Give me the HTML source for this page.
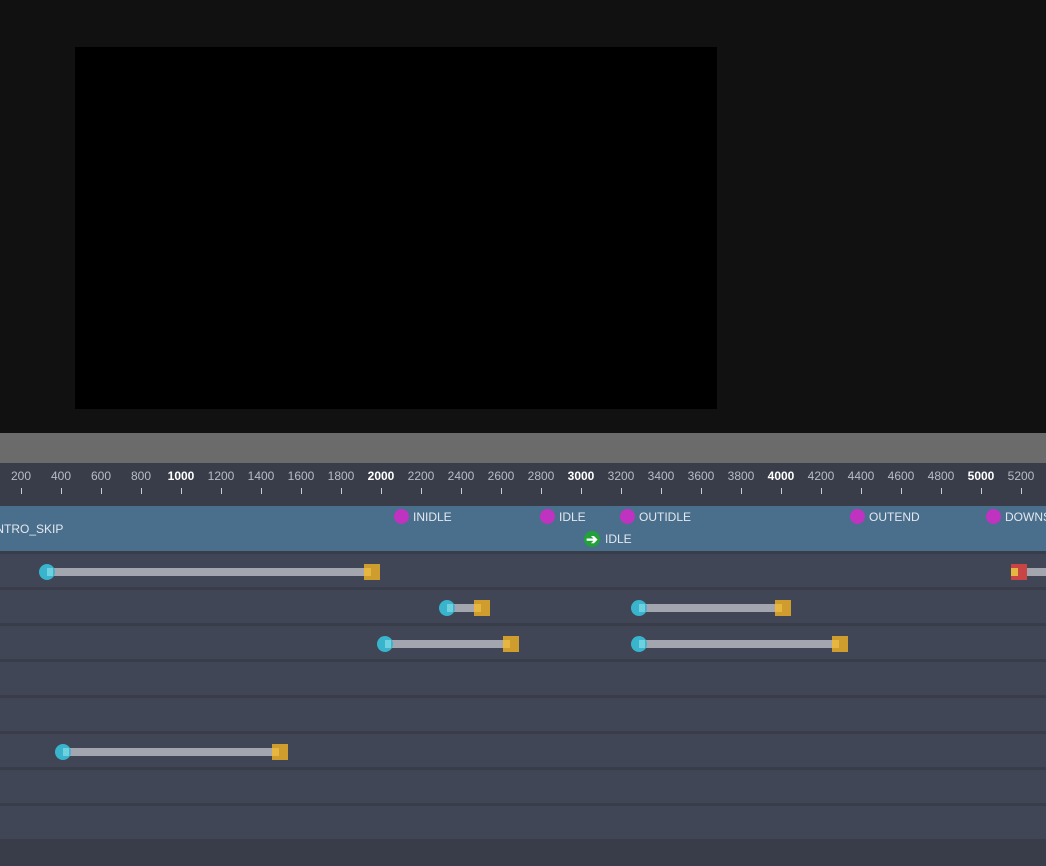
<!DOCTYPE html><html><head><style>
body{margin:0;width:1046px;height:866px;background:#111;position:relative;overflow:hidden;font-family:"Liberation Sans",sans-serif}
div{position:absolute;box-sizing:border-box}
.l{font-size:12px;color:#b8bcc6;transform:translateX(-50%);top:469px}
.l.b{color:#fff;font-weight:bold}
.t{width:1px;height:6px;background:#c8ccd4;top:488px}
.row{left:0;width:1046px;height:33px;background:#414656}
.bar{height:8px;background:#a3a6ae}
.c{width:16px;height:16px;border-radius:50%;background:#38b4cc}
.c::after{content:"";position:absolute;left:8px;top:4px;width:6px;height:8px;background:#6fd0e0}
.s{width:16px;height:16px;background:#cf9d2d}
.s::after{content:"";position:absolute;left:0;top:4px;width:7px;height:8px;background:#e6b640}
.m{width:15px;height:15px;border-radius:50%;background:#c032c0;top:509px}
.ml{font-size:12px;color:#e4e8ee;top:510px}
</style></head><body>
<div style="left:75px;top:47px;width:642px;height:362px;background:#000"></div>
<div style="left:0;top:433px;width:1046px;height:30px;background:#6b6b6b"></div>
<div style="left:0;top:463px;width:1046px;height:403px;background:#393d4a"></div>
<div style="left:0;top:506px;width:1046px;height:45px;background:#4a6f8d"></div>
<div style="left:0;top:522px;font-size:12px;color:#e4e8ee;margin-left:-8px">INTRO_SKIP</div>
<div class="m" style="left:394px"></div><div class="ml" style="left:413px">INIDLE</div>
<div class="m" style="left:540px"></div><div class="ml" style="left:559px">IDLE</div>
<div class="m" style="left:620px"></div><div class="ml" style="left:639px">OUTIDLE</div>
<div class="m" style="left:850px"></div><div class="ml" style="left:869px">OUTEND</div>
<div class="m" style="left:986px"></div><div class="ml" style="left:1005px">DOWNSTREAM</div>
<div style="left:584px;top:531px;width:16px;height:16px;border-radius:50%;background:#22a03a;color:#fff;font-size:14px;line-height:16px;text-align:center;font-weight:bold">➔</div>
<div class="ml" style="left:605px;top:532px">IDLE</div>
<div class="row" style="top:554px"></div><div class="row" style="top:590px"></div><div class="row" style="top:626px"></div><div class="row" style="top:662px"></div><div class="row" style="top:698px"></div><div class="row" style="top:734px"></div><div class="row" style="top:770px"></div><div class="row" style="top:806px"></div>
<div class="bar" style="left:47px;width:325px;top:568px"></div><div class="c" style="left:39px;top:564px"></div><div class="s" style="left:364px;top:564px"></div>
<div class="bar" style="left:1019px;width:30px;top:568px"></div><div class="s" style="left:1011px;top:564px;background:#c94545"></div>
<div class="bar" style="left:447px;width:35px;top:604px"></div><div class="c" style="left:439px;top:600px"></div><div class="s" style="left:474px;top:600px"></div>
<div class="bar" style="left:639px;width:144px;top:604px"></div><div class="c" style="left:631px;top:600px"></div><div class="s" style="left:775px;top:600px"></div>
<div class="bar" style="left:385px;width:126px;top:640px"></div><div class="c" style="left:377px;top:636px"></div><div class="s" style="left:503px;top:636px"></div>
<div class="bar" style="left:639px;width:201px;top:640px"></div><div class="c" style="left:631px;top:636px"></div><div class="s" style="left:832px;top:636px"></div>
<div class="bar" style="left:63px;width:217px;top:748px"></div><div class="c" style="left:55px;top:744px"></div><div class="s" style="left:272px;top:744px"></div>
<div class="l" style="left:21px">200</div><div class="t" style="left:21px"></div>
<div class="l" style="left:61px">400</div><div class="t" style="left:61px"></div>
<div class="l" style="left:101px">600</div><div class="t" style="left:101px"></div>
<div class="l" style="left:141px">800</div><div class="t" style="left:141px"></div>
<div class="l b" style="left:181px">1000</div><div class="t" style="left:181px"></div>
<div class="l" style="left:221px">1200</div><div class="t" style="left:221px"></div>
<div class="l" style="left:261px">1400</div><div class="t" style="left:261px"></div>
<div class="l" style="left:301px">1600</div><div class="t" style="left:301px"></div>
<div class="l" style="left:341px">1800</div><div class="t" style="left:341px"></div>
<div class="l b" style="left:381px">2000</div><div class="t" style="left:381px"></div>
<div class="l" style="left:421px">2200</div><div class="t" style="left:421px"></div>
<div class="l" style="left:461px">2400</div><div class="t" style="left:461px"></div>
<div class="l" style="left:501px">2600</div><div class="t" style="left:501px"></div>
<div class="l" style="left:541px">2800</div><div class="t" style="left:541px"></div>
<div class="l b" style="left:581px">3000</div><div class="t" style="left:581px"></div>
<div class="l" style="left:621px">3200</div><div class="t" style="left:621px"></div>
<div class="l" style="left:661px">3400</div><div class="t" style="left:661px"></div>
<div class="l" style="left:701px">3600</div><div class="t" style="left:701px"></div>
<div class="l" style="left:741px">3800</div><div class="t" style="left:741px"></div>
<div class="l b" style="left:781px">4000</div><div class="t" style="left:781px"></div>
<div class="l" style="left:821px">4200</div><div class="t" style="left:821px"></div>
<div class="l" style="left:861px">4400</div><div class="t" style="left:861px"></div>
<div class="l" style="left:901px">4600</div><div class="t" style="left:901px"></div>
<div class="l" style="left:941px">4800</div><div class="t" style="left:941px"></div>
<div class="l b" style="left:981px">5000</div><div class="t" style="left:981px"></div>
<div class="l" style="left:1021px">5200</div><div class="t" style="left:1021px"></div>
</body></html>
